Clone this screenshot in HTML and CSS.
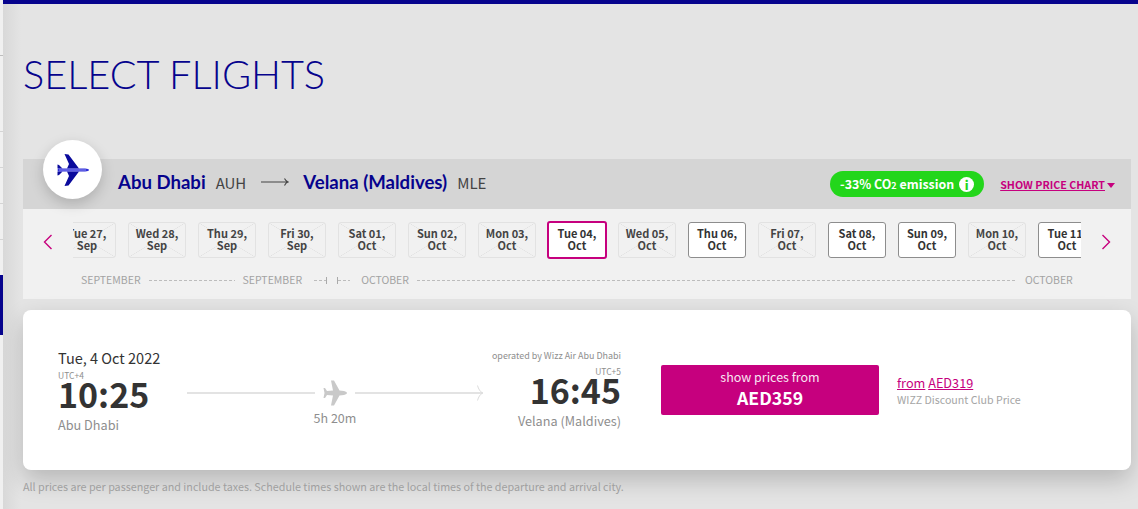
FILE: index.html
```html
<!DOCTYPE html>
<html lang="en">
<head>
    <meta charset="UTF-8">
    <title>Select flights</title>
    <link rel="stylesheet" href="styles.css">
</head>
<body>
<div class="side">
    <span class="side-line side-line-1"></span>
    <span class="side-line side-line-2"></span>
    <span class="side-line side-line-3"></span>
    <span class="side-line side-line-4"></span>
    <span class="side-line side-line-5"></span>
    <span class="side-mark"></span>
</div>
<div class="page">
    <h1 class="title">SELECT FLIGHTS</h1>

    <div class="route">
        <div class="route-icon">
            <svg width="32" height="32" viewBox="0 0 32 32">
                <path fill="#0a0a9c" d="M7.500 0 L11.500 0.500 L22 14.500 L10 14.500 L12 10 Z"/>
                <path fill="#0a0a9c" d="M7.500 32 L11.500 31.500 L22 17.500 L10 17.500 L12 22 Z"/>
                <path fill="#0a0a9c" d="M0.500 10.500 L2 11 L5.500 14.500 L0.500 14.500 Z M0.500 21.500 L2 21 L5.500 17.500 L0.500 17.500 Z"/>
                <path fill="#2f2fd6" d="M1 14.500 L28 14.500 C30.500 14.500 32 15.500 32 16 C32 16.500 30.500 17.500 28 17.500 L1 17.500 L0.500 16 Z"/>
                <path fill="#8f8ff2" d="M2 15.500 H29 V16.500 H2 Z"/>
            </svg>
        </div>
        <span class="city">Abu Dhabi</span>
        <span class="code">AUH</span>
        <svg class="route-arrow" width="28" height="10" viewBox="0 0 28 10">
            <path d="M0 5 H26 M23.500 1.500 C24.500 3.500 25.500 4.500 27 5 C25.500 5.500 24.500 6.500 23.500 8.500" fill="none" stroke="#444" stroke-width="1.100"/>
        </svg>
        <span class="city">Velana (Maldives)</span>
        <span class="code">MLE</span>
        <span class="co2">-33% CO<small>2</small> emission <i class="info">i</i></span>
        <a class="chart-link" href="#">SHOW PRICE CHART</a><span class="chart-caret"></span>
    </div>

    <div class="dates">
        <svg class="chevron" width="10" height="16" viewBox="0 0 10 16"><path d="M8.500 1 L1.500 8 L8.500 15" fill="none" stroke="#c6007e" stroke-width="1.400"/></svg>
        <div class="date-window">
            <div class="date-row">
                <div class="day day-off">Tue 27,<br>Sep</div>
                <div class="day day-off">Wed 28,<br>Sep</div>
                <div class="day day-off">Thu 29,<br>Sep</div>
                <div class="day day-off">Fri 30,<br>Sep</div>
                <div class="day day-off">Sat 01,<br>Oct</div>
                <div class="day day-off">Sun 02,<br>Oct</div>
                <div class="day day-off">Mon 03,<br>Oct</div>
                <div class="day day-current">Tue 04,<br>Oct</div>
                <div class="day day-off">Wed 05,<br>Oct</div>
                <div class="day">Thu 06,<br>Oct</div>
                <div class="day day-off">Fri 07,<br>Oct</div>
                <div class="day">Sat 08,<br>Oct</div>
                <div class="day">Sun 09,<br>Oct</div>
                <div class="day day-off">Mon 10,<br>Oct</div>
                <div class="day">Tue 11,<br>Oct</div>
            </div>
        </div>
        <svg class="chevron" width="10" height="16" viewBox="0 0 10 16"><path d="M1.500 1 L8.500 8 L1.500 15" fill="none" stroke="#c6007e" stroke-width="1.400"/></svg>

        <div class="months">
            <span>SEPTEMBER</span>
            <i class="dash dash-a"></i>
            <span>SEPTEMBER</span>
            <i class="dash-end dash-b"></i>
            <i class="dash-end dash-c"></i>
            <span>OCTOBER</span>
            <i class="dash dash-d"></i>
            <span>OCTOBER</span>
        </div>
    </div>

    <div class="flight">
        <div class="leg">
            <div class="flight-date">Tue, 4 Oct 2022</div>
            <div class="utc">UTC+4</div>
            <div class="time">10:25</div>
            <div class="place">Abu Dhabi</div>
        </div>
        <div class="path">
            <div class="path-line">
                <i class="rule"></i>
                <svg class="path-plane" width="24" height="26" viewBox="0 0 24 26">
                    <path fill="#c9c9c9" d="M8 0.500 L11 0.500 L16.500 10.500 L21 11 C23 11.500 24 12.500 24 13 C24 13.500 23 14.500 21 15 L16.500 15.500 L11 25.500 L8 25.500 L10 15.500 L4 15 L2 18 L0.500 18 L1.500 13 L0.500 8 L2 8 L4 11 L10 10.500 Z"/>
                </svg>
                <i class="rule rule-end">
                    <svg class="rule-head" width="6" height="16" viewBox="0 0 6 16"><path d="M0.500 0.500 C1.500 4 3 6.500 5.500 8 C3 9.500 1.500 12 0.500 15.500" fill="none" stroke="#dcdcdc"/></svg>
                </i>
            </div>
            <div class="duration">5h 20m</div>
        </div>
        <div class="leg leg-end">
            <div class="operator">operated by Wizz Air Abu Dhabi</div>
            <div class="utc">UTC+5</div>
            <div class="time">16:45</div>
            <div class="place">Velana (Maldives)</div>
        </div>
        <div class="price-btn">
            <div class="price-label">show prices from</div>
            <div class="price-value">AED359</div>
        </div>
        <div class="club">
            <div class="club-price"><a href="#">from</a> <a href="#">AED319</a></div>
            <div class="club-label">WIZZ Discount Club Price</div>
        </div>
    </div>

    <p class="note">All prices are per passenger and include taxes. Schedule times shown are the local times of the departure and arrival city.</p>
</div>
</body>
</html>
```

FILE: styles.css
```css
* {
    margin: 0;
    padding: 0;
    box-sizing: border-box;
}
body {
    display: flex;
    height: 509px;
    overflow: hidden;
    background: #e4e4e4;
    font-family: "Noto Sans CJK SC", "Source Sans Pro", sans-serif;
    color: #333;
}
.side {
    width: 3px;
    flex: none;
    position: relative;
    background: #f0f0f0;
}
.side-line {
    position: absolute;
    left: 0;
    width: 3px;
    height: 1px;
    background: #d4d4d4;
}
.side-line-1 { top: 55px; background: #bdbdbd; }
.side-line-2 { top: 131px; }
.side-line-3 { top: 167px; }
.side-line-4 { top: 203px; }
.side-line-5 { top: 239px; }
.side-mark {
    position: absolute;
    left: 0;
    top: 275px;
    width: 3px;
    height: 60px;
    background: #06038d;
}
.page {
    flex: 1;
    min-width: 0;
    border-top: 4px solid #06038d;
    padding: 0 7px 0 20px;
    background: linear-gradient(to right, #d8d8d8, #e4e4e4 18px);
}
.title {
    font-family: Lato, sans-serif;
    font-weight: 300;
    font-size: 39.700px;
    line-height: 46px;
    color: #06038d;
    margin-top: 47px;
}

.route {
    display: flex;
    align-items: center;
    height: 50px;
    margin-top: 62px;
    background: #d5d5d5;
    position: relative;
    padding: 0 16px 0 95px;
}
.route-icon {
    position: absolute;
    left: 20px;
    top: -19px;
    width: 59px;
    height: 59px;
    border-radius: 50%;
    background: #fff;
    box-shadow: 0 5px 14px rgba(0, 0, 0, .18);
    display: flex;
    align-items: center;
    justify-content: center;
}
.city {
    font-family: Lato, sans-serif;
    font-weight: 700;
    font-size: 18.600px;
    color: #06038d;
    margin-bottom: 4px;
}
.code {
    font-size: 15px;
    color: #444;
    margin: 0 0 4px 10px;
}
.route-arrow {
    margin: 0 14px 4px 15px;
}
.co2 {
    margin-left: auto;
    height: 26px;
    width: 154px;
    border-radius: 13px;
    background: #23d61b;
    color: #fff;
    font-size: 12.400px;
    font-weight: 700;
    display: flex;
    align-items: center;
    justify-content: center;
    gap: 3px;
}
.co2 small {
    font-size: 9px;
    margin: 2px 0 0 -3px;
}
.info {
    width: 15px;
    height: 15px;
    margin-left: 2px;
    border-radius: 50%;
    background: #fff;
    color: #23d61b;
    font-size: 12px;
    font-style: normal;
    font-weight: 900;
    line-height: 15px;
    text-align: center;
}
.chart-link {
    margin-left: 16px;
    color: #c6007e;
    font-size: 10.700px;
    font-weight: 700;
}
.chart-caret {
    width: 0;
    height: 0;
    margin: 3px 0 0 2px;
    border-left: 4px solid transparent;
    border-right: 4px solid transparent;
    border-top: 5px solid #c6007e;
}

.dates {
    height: 90px;
    background: #f1f1f1;
    display: flex;
    flex-wrap: wrap;
    align-items: flex-start;
    align-content: flex-start;
    padding: 12px 0 0 20px;
}
.chevron {
    margin-top: 13px;
    flex: none;
}
.date-window {
    width: 1008px;
    margin: 0 20px;
    padding: 1px 0;
    overflow: hidden;
}
.date-row {
    display: flex;
    align-items: flex-start;
    gap: 12px;
    margin-left: -15px;
}
.day {
    flex: none;
    width: 58px;
    height: 36px;
    border: 1px solid #8d8d8d;
    border-radius: 3px;
    background: #fff;
    color: #333;
    font-size: 11px;
    font-weight: 700;
    line-height: 12px;
    text-align: center;
    padding-top: 4px;
}
.day-off {
    border-color: #e2e2e2;
    background:
        linear-gradient(to top right, transparent calc(50% - .5px), #e0e0e0 50%, transparent calc(50% + .5px)),
        linear-gradient(to bottom right, transparent calc(50% - .5px), #e0e0e0 50%, transparent calc(50% + .5px)),
        #f1f1f1;
    color: #444;
}
.day-current {
    width: 60px;
    height: 38px;
    margin: -1px;
    border: 2px solid #c6007e;
}
.months {
    flex: none;
    width: 1050px;
    display: flex;
    align-items: center;
    margin: 14px 0 0 38px;
    color: #a3a3a3;
    font-size: 10.500px;
    line-height: 14px;
}
.dash {
    display: block;
    flex: none;
    height: 1px;
    margin: 0 8px;
    background: repeating-linear-gradient(to right, #bcbcbc 0 3px, transparent 3px 5px);
}
.dash-a { width: 86px; }
.dash-d { width: 600px; }
.dash-end {
    display: block;
    flex: none;
    width: 13px;
    height: 7px;
    background: repeating-linear-gradient(to right, #bcbcbc 0 3px, transparent 3px 5px) 0 3px / 100% 1px no-repeat;
}
.dash-b { margin-left: 12px; border-right: 1px solid #aaa; }
.dash-c { margin: 0 11px 0 10px; border-left: 1px solid #aaa; }

.flight {
    margin-top: 11px;
    height: 160px;
    background: #fff;
    border-radius: 8px;
    box-shadow: 0 10px 24px rgba(0, 0, 0, .2);
    display: flex;
    align-items: flex-start;
    padding: 39px 0 0 35px;
}
.leg {
    width: 129px;
}
.flight-date {
    font-size: 14.500px;
    line-height: 18px;
}
.utc {
    margin-top: 4px;
    font-size: 8.500px;
    line-height: 9px;
    color: #8e8e8e;
}
.time {
    margin-top: -1px;
    font-size: 34px;
    font-weight: 700;
    line-height: 30px;
    color: #333;
}
.place {
    margin-top: 7px;
    font-size: 12.700px;
    line-height: 18px;
    color: #8e8e8e;
}
.path {
    width: 296px;
    padding-top: 31px;
    text-align: center;
}
.path-line {
    display: flex;
    align-items: center;
    height: 26px;
}
.rule {
    flex: 1;
    height: 2px;
    background: #e3e3e3;
}
.rule-end {
    position: relative;
}
.rule-head {
    position: absolute;
    right: 0;
    top: -7px;
}
.path-plane {
    margin: 0 8px;
}
.duration {
    margin-top: 3px;
    font-size: 12.500px;
    line-height: 18px;
    color: #8e8e8e;
}
.leg-end {
    width: 138px;
    text-align: right;
}
.operator {
    font-size: 8.950px;
    line-height: 14px;
    color: #8e8e8e;
    white-space: nowrap;
    margin-bottom: 4px;
}
.price-btn {
    width: 218px;
    height: 50px;
    margin: 16px 0 0 40px;
    border-radius: 2px;
    background: #c6007e;
    color: #fff;
    text-align: center;
}
.price-label {
    font-size: 12.500px;
    line-height: 16px;
    padding-top: 4px;
    opacity: .9;
}
.price-value {
    font-size: 17.700px;
    font-weight: 700;
    line-height: 24px;
}
.club {
    margin: 26px 0 0 18px;
}
.club-price {
    font-size: 12.700px;
    line-height: 16px;
}
.club-price a {
    color: #c6007e;
}
.club-label {
    margin-top: 1px;
    font-size: 10.650px;
    line-height: 15px;
    color: #a5a5a5;
}
.note {
    margin-top: 9px;
    font-size: 10.750px;
    line-height: 15px;
    color: #a0a0a0;
}
```
